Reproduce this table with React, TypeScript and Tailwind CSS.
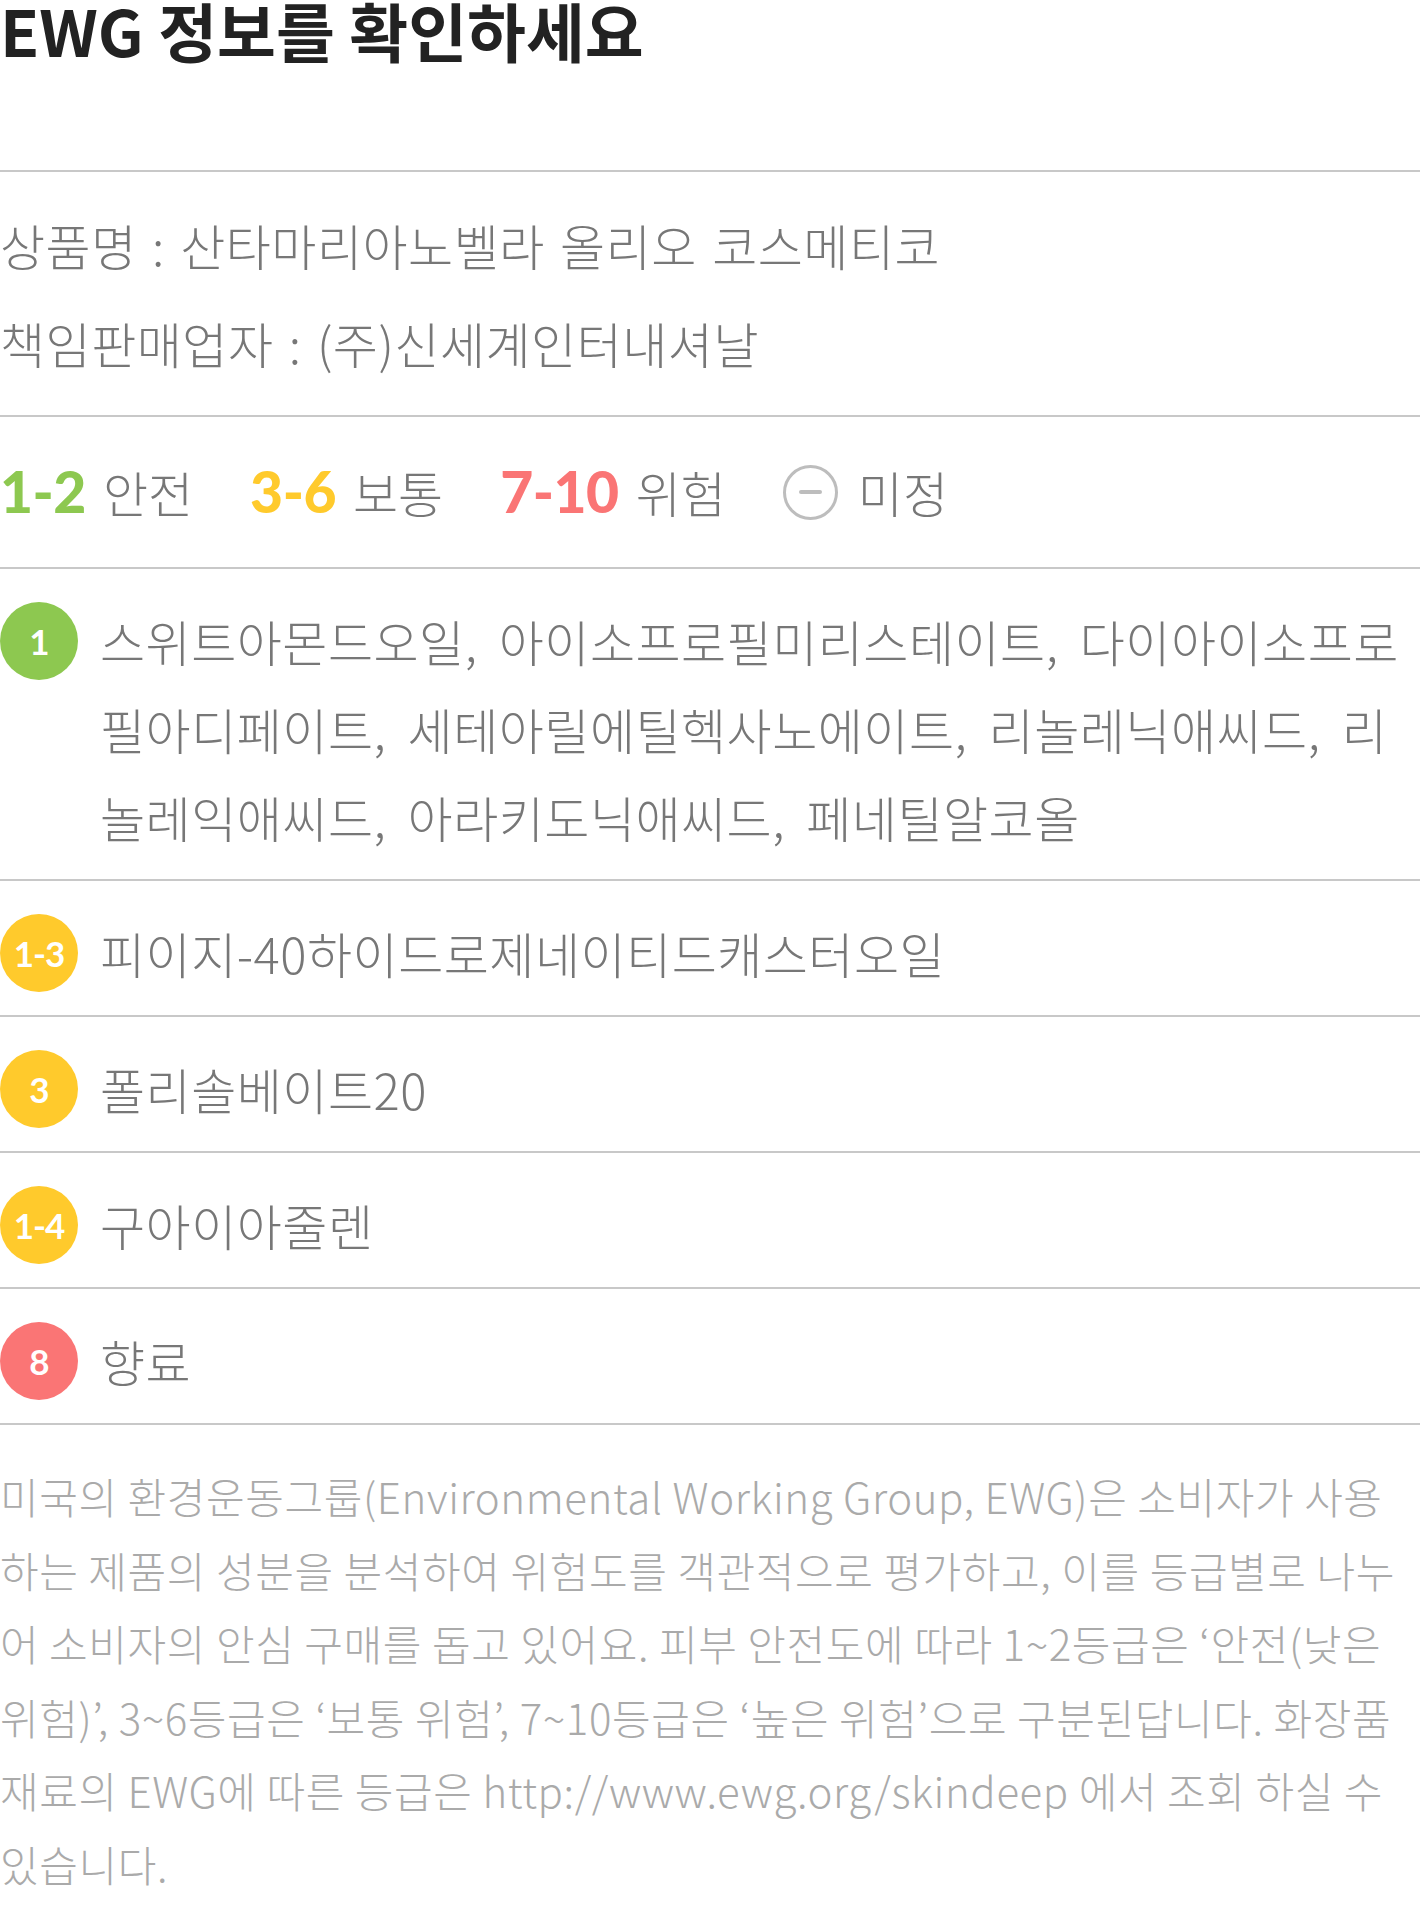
import React from "react";

type Grade = { label: string; color: string; text: string };

const LEGEND = [
  { num: "1-2", color: "text-[#8dc850]", label: "안전" },
  { num: "3-6", color: "text-[#ffca2c]", label: "보통" },
  { num: "7-10", color: "text-[#fa7575]", label: "위험" },
];

const INGREDIENTS: Grade[] = [
  {
    label: "1",
    color: "bg-[#8dc850]",
    text: "스위트아몬드오일, 아이소프로필미리스테이트, 다이아이소프로필아디페이트, 세테아릴에틸헥사노에이트, 리놀레닉애씨드, 리놀레익애씨드, 아라키도닉애씨드, 페네틸알코올",
  },
  { label: "1-3", color: "bg-[#ffca2c]", text: "피이지-40하이드로제네이티드캐스터오일" },
  { label: "3", color: "bg-[#ffca2c]", text: "폴리솔베이트20" },
  { label: "1-4", color: "bg-[#ffca2c]", text: "구아이아줄렌" },
  { label: "8", color: "bg-[#fa7575]", text: "향료" },
];

function Badge({ label, color }: { label: string; color: string }) {
  return (
    <div
      className={`mt-[5px] flex h-[78px] w-[78px] shrink-0 items-center justify-center rounded-full ${color} font-['Lato',sans-serif] text-[35px] font-bold tracking-[-1px] text-white`}
    >
      {label}
    </div>
  );
}

export default function App() {
  return (
    <div className="w-[1420px] bg-white font-['Noto_Sans_CJK_KR',sans-serif] text-[#777]">
      {/* Title */}
      <h1 className="h-[170px] text-[64px] font-bold leading-[58px] text-[#222]">
        EWG 정보를 확인하세요
      </h1>

      {/* Product info */}
      <div className="border-t-2 border-[#c8c8c8] pb-[23px] pt-[24px] text-[49px] font-light leading-[98px] tracking-[0.5px] [word-spacing:4px]">
        <p>상품명 : 산타마리아노벨라 올리오 코스메티코</p>
        <p>책임판매업자 : (주)신세계인터내셔날</p>
      </div>

      {/* Legend */}
      <div className="flex h-[152px] items-center gap-[57px] border-t-2 border-[#c8c8c8] text-[49px] font-light">
        {LEGEND.map((g) => (
          <div key={g.num} className="flex items-center gap-[17px]">
            <span className={`font-['Lato',sans-serif] text-[57px] font-black tracking-[-0.5px] ${g.color}`}>
              {g.num}
            </span>
            <span>{g.label}</span>
          </div>
        ))}
        <div className="flex items-center gap-[20px]">
          <span className="flex h-[55px] w-[55px] items-center justify-center rounded-full border-[3px] border-[#bdbdbd]">
            <span className="h-[4px] w-[23px] rounded-full bg-[#bdbdbd]" />
          </span>
          <span>미정</span>
        </div>
      </div>

      {/* Ingredients */}
      {INGREDIENTS.map((ing) => (
        <div
          key={ing.label + ing.text}
          className="flex items-start gap-[22px] border-t-2 border-[#c8c8c8] pb-[18px] pr-[10px] pt-[28px]"
        >
          <Badge label={ing.label} color={ing.color} />
          <p className="min-w-0 flex-1 text-[49px] font-light leading-[88px] tracking-[0.5px] [word-spacing:10px]">
            {ing.text}
          </p>
        </div>
      ))}

      {/* Description */}
      <p className="border-t-2 border-[#c8c8c8] pb-[11px] pt-[34px] text-[42px] font-light leading-[73.5px] tracking-[0.6px] text-[#aaa]">
        미국의 환경운동그룹(Environmental Working Group, EWG)은 소비자가 사용하는 제품의 성분을 분석하여 위험도를 객관적으로 평가하고, 이를 등급별로 나누어 소비자의 안심 구매를 돕고 있어요. 피부 안전도에 따라 1~2등급은 ‘안전(낮은 위험)’, 3~6등급은 ‘보통 위험’, 7~10등급은 ‘높은 위험’으로 구분된답니다. 화장품 재료의 EWG에 따른 등급은 http://www.ewg.org/skindeep 에서 조회 하실 수 있습니다.
      </p>
    </div>
  );
}
